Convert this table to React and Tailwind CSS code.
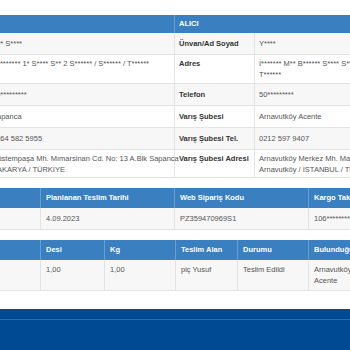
import React from "react";

const font = { fontFamily: '"Liberation Sans", Arial, sans-serif' };

function T1Row({ sv, label, rv, grey }) {
  return (
    <div className={`grid grid-cols-[90px_188px_80px_150px] border-b border-[#e3e3e3] ${grey ? "bg-[#f7f7f7]" : "bg-white"}`}>
      <div className="px-[5px] py-[5px] border-r border-[#e3e3e3]"></div>
      <div className="px-[5px] py-[5px] leading-[11px] text-[#555] border-r border-[#e3e3e3] whitespace-nowrap">{sv}</div>
      <div className="px-[4px] py-[5px] leading-[11px] font-bold text-[#333] border-r border-[#e3e3e3] whitespace-nowrap">{label}</div>
      <div className="px-[4px] py-[5px] leading-[11px] text-[#555] whitespace-nowrap">{rv}</div>
    </div>
  );
}

export default function App() {
  return (
    <div className="w-[350px] h-[350px] overflow-hidden bg-white flex flex-col text-[7.5px]" style={font}>
      <div className="h-[15px] shrink-0"></div>

      {/* Table 1 */}
      <div className="overflow-hidden shrink-0">
        <div className="ml-[-103px] w-[508px]">
          <div className="grid grid-cols-[90px_188px_80px_150px] h-[18px] bg-[#3a7fc0] text-white font-bold items-center">
            <div className="h-full border-r border-[#6a9fd3]"></div>
            <div className="h-full border-r border-[#6a9fd3]"></div>
            <div className="px-[4px] h-full flex items-center col-span-2">ALICI</div>
          </div>
          <T1Row grey sv="R** S****" label="Ünvan/Ad Soyad" rv="Y****" />
          <div className="grid grid-cols-[90px_188px_80px_150px] border-b border-[#e3e3e3] bg-white">
            <div className="border-r border-[#e3e3e3]"></div>
            <div className="px-[5px] pt-[3px] pb-[3px] leading-[11px] text-[#555] border-r border-[#e3e3e3] whitespace-nowrap">K******** 1* S**** S** 2 S****** / S****** / T******</div>
            <div className="px-[4px] pt-[3px] pb-[3px] leading-[11px] font-bold text-[#333] border-r border-[#e3e3e3]">Adres</div>
            <div className="px-[4px] pt-[3px] pb-[3px] leading-[11px] text-[#555] whitespace-nowrap">İ******* M** B****** S**** S** B*****<br />T******</div>
          </div>
          <T1Row grey sv="05*********" label="Telefon" rv="50*********" />
          <T1Row sv="Sapanca" label="Varış Şubesi" rv="Arnavutköy Acente" />
          <T1Row grey sv="0264 582 5955" label="Varış Şubesi Tel." rv="0212 597 9407" />
          <div className="grid grid-cols-[90px_188px_80px_150px] border-b border-[#e3e3e3] bg-white">
            <div className="border-r border-[#e3e3e3]"></div>
            <div className="px-[5px] pt-[3px] pb-[2px] leading-[11px] text-[#555] border-r border-[#e3e3e3] whitespace-nowrap">Rüstempaşa Mh. Mımarsinan Cd. No: 13 A.Blk Sapanca<br />SAKARYA / TÜRKİYE</div>
            <div className="px-[4px] pt-[3px] pb-[2px] leading-[11px] font-bold text-[#333] border-r border-[#e3e3e3] whitespace-nowrap">Varış Şubesi Adresi</div>
            <div className="px-[4px] pt-[3px] pb-[2px] leading-[11px] text-[#555] whitespace-nowrap">Arnavutköy Merkez Mh. Marmara Cd.<br />Arnavutköy / İSTANBUL / TÜRKİYE</div>
          </div>
        </div>
      </div>

      <div className="h-[10px] shrink-0"></div>

      {/* Table 2 */}
      <div className="overflow-hidden shrink-0">
        <div className="ml-[-60px] w-[500px]">
          <div className="grid grid-cols-[101px_134px_134px_131px] h-[20px] bg-[#3a7fc0] text-white font-bold">
            <div className="border-r border-[#6a9fd3]"></div>
            <div className="px-[5px] flex items-center border-r border-[#6a9fd3]">Planlanan Teslim Tarihi</div>
            <div className="px-[5px] flex items-center border-r border-[#6a9fd3]">Web Sipariş Kodu</div>
            <div className="px-[5px] flex items-center">Kargo Takip No</div>
          </div>
          <div className="grid grid-cols-[101px_134px_134px_131px] h-[22px] bg-[#f7f7f7] border-b border-[#e3e3e3] text-[#555]">
            <div className="border-r border-[#e3e3e3]"></div>
            <div className="px-[5px] flex items-center border-r border-[#e3e3e3]">4.09.2023</div>
            <div className="px-[5px] flex items-center border-r border-[#e3e3e3]">PZ359470969S1</div>
            <div className="px-[5px] flex items-center">106*********</div>
          </div>
        </div>
      </div>

      <div className="h-[10px] shrink-0"></div>

      {/* Table 3 */}
      <div className="overflow-hidden shrink-0">
        <div className="ml-[-60px] w-[500px]">
          <div className="grid grid-cols-[101px_64px_71px_62px_71px_131px] h-[20px] bg-[#3a7fc0] text-white font-bold">
            <div className="border-r border-[#6a9fd3]"></div>
            <div className="px-[5px] flex items-center border-r border-[#6a9fd3]">Desi</div>
            <div className="px-[5px] flex items-center border-r border-[#6a9fd3]">Kg</div>
            <div className="px-[5px] flex items-center border-r border-[#6a9fd3]">Teslim Alan</div>
            <div className="px-[5px] flex items-center border-r border-[#6a9fd3]">Durumu</div>
            <div className="px-[5px] flex items-center">Bulunduğu Şube</div>
          </div>
          <div className="grid grid-cols-[101px_64px_71px_62px_71px_131px] bg-[#f7f7f7] border-b border-[#e3e3e3] text-[#555] leading-[11px]">
            <div className="border-r border-[#e3e3e3]"></div>
            <div className="px-[5px] py-[4px] border-r border-[#e3e3e3]">1,00</div>
            <div className="px-[5px] py-[4px] border-r border-[#e3e3e3]">1,00</div>
            <div className="px-[5px] py-[4px] border-r border-[#e3e3e3]">piç Yusuf</div>
            <div className="px-[5px] py-[4px] border-r border-[#e3e3e3]">Teslim Edildi</div>
            <div className="px-[5px] py-[4px]">Arnavutköy<br />Acente</div>
          </div>
        </div>
      </div>

      <div className="h-[18px] shrink-0"></div>

      {/* Footer */}
      <div className="flex-1 bg-[#004a93] flex flex-col">
        <div className="h-[10px]"></div>
        <div className="h-px bg-[#2f6bb0]"></div>
      </div>
    </div>
  );
}
